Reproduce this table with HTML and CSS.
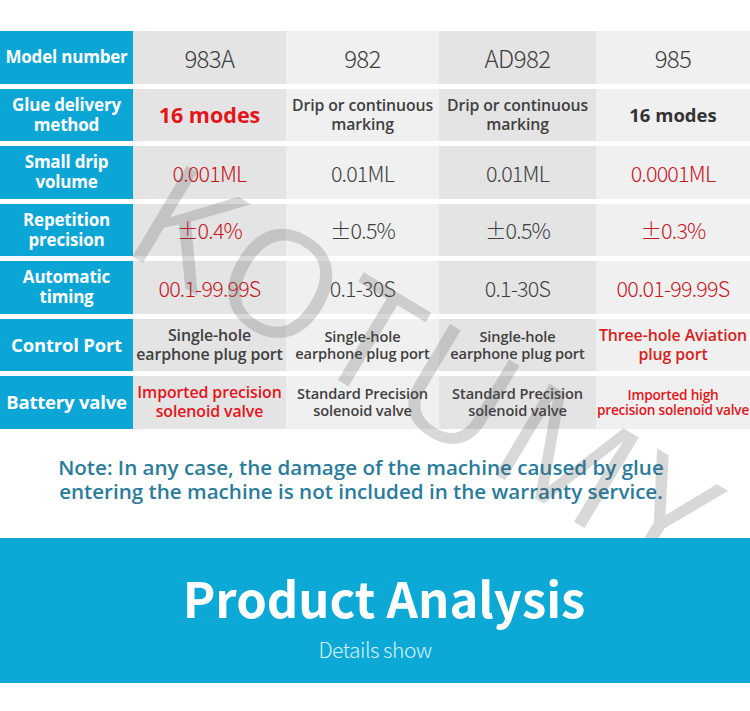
FILE: index.html
```html
<!DOCTYPE html>
<html>
<head>
<meta charset="utf-8">
<link rel="stylesheet" href="styles.css">
</head>
<body>
<div class="page">
  <div class="spec">
    <div class="lab">Model number</div>
    <div class="c c-dark num">983A</div>
    <div class="c c-light num">982</div>
    <div class="c c-dark num">AD982</div>
    <div class="c c-light num">985</div>

    <div class="lab">Glue delivery<br>method</div>
    <div class="c c-dark modes red">16 modes</div>
    <div class="c c-light txt">Drip or continuous<br>marking</div>
    <div class="c c-dark txt">Drip or continuous<br>marking</div>
    <div class="c c-light modes-sm">16 modes</div>

    <div class="lab">Small drip<br>volume</div>
    <div class="c c-dark val dred">0.001ML</div>
    <div class="c c-light val">0.01ML</div>
    <div class="c c-dark val">0.01ML</div>
    <div class="c c-light val dred">0.0001ML</div>

    <div class="lab">Repetition<br>precision</div>
    <div class="c c-dark val dred">±0.4%</div>
    <div class="c c-light val">±0.5%</div>
    <div class="c c-dark val">±0.5%</div>
    <div class="c c-light val dred">±0.3%</div>

    <div class="lab">Automatic<br>timing</div>
    <div class="c c-dark val dred">00.1-99.99S</div>
    <div class="c c-light val">0.1-30S</div>
    <div class="c c-dark val">0.1-30S</div>
    <div class="c c-light val dred">00.01-99.99S</div>

    <div class="lab lab-lg">Control Port</div>
    <div class="c c-dark txt-lg">Single-hole<br>earphone plug port</div>
    <div class="c c-light txt-sm">Single-hole<br>earphone plug port</div>
    <div class="c c-dark txt-sm">Single-hole<br>earphone plug port</div>
    <div class="c c-light txt-lg red2">Three-hole Aviation<br>plug port</div>

    <div class="lab lab-lg">Battery valve</div>
    <div class="c c-dark txt-lg red">Imported precision<br>solenoid valve</div>
    <div class="c c-light txt-sm">Standard Precision<br>solenoid valve</div>
    <div class="c c-dark txt-sm">Standard Precision<br>solenoid valve</div>
    <div class="c c-light txt-xs red">Imported high<br>precision solenoid valve</div>
  </div>

  <p class="note">Note: In any case, the damage of the machine caused by glue<br>entering the machine is not included in the warranty service.</p>

  <section class="banner">
    <h1 class="banner-title">Product Analysis</h1>
    <p class="banner-sub">Details show</p>
  </section>

  <div class="watermark">KOTUMY</div>
</div>
</body>
</html>
```

FILE: styles.css
```css
* { box-sizing: border-box; }
html, body { margin: 0; padding: 0; background: #fff; }
.page {
  position: relative;
  width: 750px;
  height: 711px;
  overflow: hidden;
  padding-top: 31px;
  font-family: "Open Sans", "Noto Sans", sans-serif;
}
.spec {
  display: grid;
  grid-template-columns: 133px 153px 153px 157px 154px;
  grid-auto-rows: 52.5px;
  row-gap: 5px;
}
.lab {
  background: #0ca6d6;
  color: #fff;
  font-weight: 700;
  font-size: 17px;
  line-height: 20px;
  letter-spacing: -0.2px;
  display: flex;
  align-items: center;
  justify-content: center;
  text-align: center;
}
.lab-lg { font-size: 18.5px; letter-spacing: -0.2px; }
.c {
  display: flex;
  align-items: center;
  justify-content: center;
  text-align: center;
  color: #3f3f3f;
}
.c-dark { background: #e4e4e4; }
.c-light { background: #f0f0f0; }
.num {
  font-family: "Noto Sans CJK SC", "Noto Sans", sans-serif;
  font-weight: 300;
  font-size: 24px;
  letter-spacing: -0.6px;
}
.val {
  font-family: "Noto Sans CJK SC", "Noto Sans", sans-serif;
  font-weight: 300;
  font-size: 21.5px;
  letter-spacing: -0.8px;
}
.modes { font-weight: 700; font-size: 21.5px; }
.modes-sm { font-weight: 700; font-size: 18.5px; color: #333; }
.txt { font-weight: 600; font-size: 15.8px; line-height: 19px; letter-spacing: -0.1px; }
.txt-lg { font-weight: 600; font-size: 15.9px; line-height: 19px; letter-spacing: -0.1px; }
.txt-sm { font-weight: 600; font-size: 14.6px; line-height: 17px; letter-spacing: -0.1px; }
.txt-xs { font-weight: 600; font-size: 13.6px; line-height: 15px; letter-spacing: -0.2px; }
.red { color: #e3151b; }
.red2 { color: #d61f22; }
.dred { color: #c5161d; }
.note {
  margin: 26px 0 0;
  padding-right: 28px;
  text-align: center;
  color: #2a7b9c;
  font-family: "Open Sans", sans-serif;
  font-weight: 600;
  font-size: 20.6px;
  line-height: 24px;
  letter-spacing: 0;
}
.banner {
  position: relative;
  z-index: 2;
  margin-top: 35px;
  height: 145px;
  background: #0ca8d6;
  display: flex;
  flex-direction: column;
  align-items: center;
  padding-top: 29px;
}
.banner-title {
  margin: 0 0 0 18px;
  font-family: "Noto Sans CJK SC", "Noto Sans", sans-serif;
  font-weight: 700;
  font-size: 49px;
  line-height: 60px;
  color: #fff;
}
.banner-sub {
  margin: 9px 0 0;
  font-family: "Noto Sans CJK SC", "Noto Sans", sans-serif;
  font-weight: 300;
  font-size: 21px;
  line-height: 26px;
  color: #d6f1fa;
  letter-spacing: -0.5px;
}
.watermark {
  position: absolute;
  z-index: 1;
  left: 120px;
  top: 118px;
  transform-origin: 0 131px;
  transform: rotate(31deg);
  font-family: "Open Sans", sans-serif;
  font-weight: 400;
  font-size: 148px;
  line-height: 1;
  letter-spacing: 7px;
  color: rgba(90, 90, 90, 0.24);
  white-space: nowrap;
  pointer-events: none;
}
```
